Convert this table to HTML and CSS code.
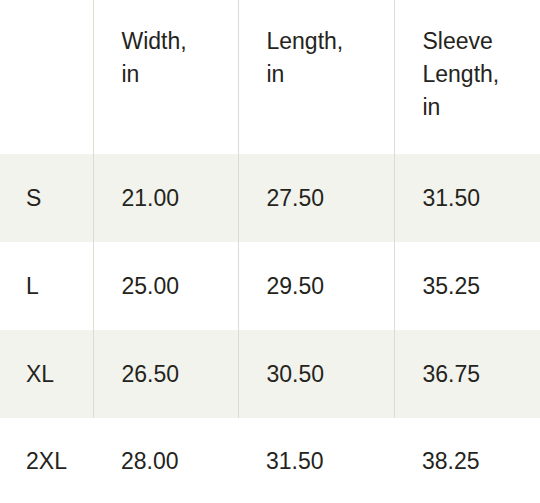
FILE: index.html
```html
<!DOCTYPE html>
<html>
<head>
<meta charset="utf-8">
<link rel="stylesheet" href="styles.css">
</head>
<body>
<table class="size-table">
  <colgroup>
    <col class="c1"><col class="c2"><col class="c3"><col class="c4">
  </colgroup>
  <thead>
    <tr class="head">
      <th></th>
      <th>Width,<br>in</th>
      <th>Length,<br>in</th>
      <th>Sleeve<br>Length,<br>in</th>
    </tr>
  </thead>
  <tbody>
    <tr class="shade"><td>S</td><td>21.00</td><td>27.50</td><td>31.50</td></tr>
    <tr><td>L</td><td>25.00</td><td>29.50</td><td>35.25</td></tr>
    <tr class="shade"><td>XL</td><td>26.50</td><td>30.50</td><td>36.75</td></tr>
    <tr class="last"><td>2XL</td><td>28.00</td><td>31.50</td><td>38.25</td></tr>
  </tbody>
</table>
</body>
</html>
```
FILE: styles.css
```css
html, body {
  margin: 0;
  padding: 0;
  background: #ffffff;
}
body {
  font-family: "Liberation Sans", Arial, sans-serif;
  color: #24241c;
  font-size: 23px;
}
.size-table {
  border-collapse: collapse;
  table-layout: fixed;
  width: 540px;
}
.c1 { width: 93px; }
.c2 { width: 145px; }
.c3 { width: 156px; }
.c4 { width: 146px; }
.size-table th,
.size-table td {
  text-align: left;
  font-weight: normal;
  line-height: 33px;
  padding: 0 0 0 28px;
  border-right: 1px solid #dcdcd3;
}
.size-table th:first-child,
.size-table td:first-child {
  padding-left: 26px;
}
.size-table th:last-child,
.size-table td:last-child {
  border-right: none;
}
.head th {
  vertical-align: top;
  height: 154px;
  box-sizing: border-box;
  padding-top: 25px;
}
tbody td {
  height: 88px;
  vertical-align: middle;
}
.shade td {
  background: #f3f3ee;
}
.last td {
  border-right: none;
  height: 86px;
}
```
